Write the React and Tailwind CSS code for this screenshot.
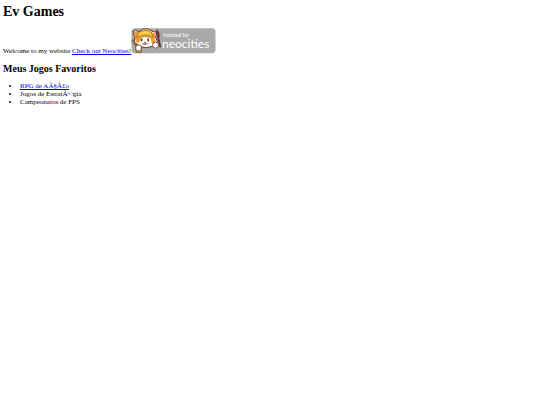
const games = ["Jogos de EstratÃ©gia", "Campeonatos de FPS"];

function NeocitiesBadge() {
  return (
    <svg viewBox="0 0 85 26" className="h-[26px] w-[85px] shrink-0" role="img" aria-label="Hosted by Neocities">
      <rect x="0.5" y="0.2" width="84" height="25" rx="3.5" fill="#a9a9a9" />
      <g strokeLinejoin="round" strokeLinecap="round">
        <path d="M3.5 8.5L2 3.8L4.6 2.2L8 4L11.5 1L17.5 0.9L22 3.6L25.6 4.2L24.6 9.5L26.6 14L22.5 18L15 19.8L8 18.2L3.8 14Z" fill="#fff" stroke="#5b3a1c" strokeWidth="1" />
        <path d="M3.8 9.5L2.8 4.6L5 3.2L8 5L11.8 1.9L17 1.7L21.4 4.8L24.6 5.2L23.6 11.2L25 14L21.2 16L19.4 10L13.5 9L10 10L8 15.2L5 14Z" fill="#ee9b35" />
        <path d="M6 9.3L6.8 5.2Q12.8 0.4 19.6 3.5L22.4 9Q14.5 5.7 6 9.3Z" fill="#f4bd3b" stroke="#a5651e" strokeWidth="0.7" />
        <path d="M9.5 5.5Q13.5 3 18 4.8" fill="none" stroke="#ffe06a" strokeWidth="1" />
        <ellipse cx="10.6" cy="12" rx="0.9" ry="1.4" fill="#422817" />
        <ellipse cx="17.2" cy="12" rx="0.9" ry="1.4" fill="#422817" />
        <path d="M13.2 14H14.8L14 14.9ZM11.3 15.8Q14 17.6 17 15.6" fill="#7b422e" stroke="#7b422e" strokeWidth="0.5" />
        <path d="M1.6 12.6L6.5 18.8" stroke="#643a28" strokeWidth="2.2" />
        <path d="M1.8 12.6L4.8 16.2" stroke="#d9c39b" strokeWidth="1" />
        <path d="M27 8.5L29.2 18.6" stroke="#63281e" strokeWidth="1.7" />
        <path d="M26.8 9Q24.8 4.8 25.8 1.8Q29 4.5 28.2 8.8Z" fill="#8b3433" stroke="#4b2020" strokeWidth="0.6" />
        <path d="M4.6 21.5L5.5 24.6L10.5 24.6L10.5 22" fill="#e59c4a" stroke="#754b2c" strokeWidth="0.7" />
        <circle cx="7.6" cy="20" r="3.1" fill="#fff" stroke="#754b2c" strokeWidth="0.9" />
        <circle cx="24.6" cy="17.2" r="3" fill="#fff" stroke="#754b2c" strokeWidth="0.9" />
      </g>
      <text x="32" y="9" fill="#fff" className="font-['Lato',sans-serif] text-[6px]">hosted by</text>
      <text x="31" y="20" fill="#fff" className="font-['Lato',sans-serif] text-[12px]">neocities</text>
    </svg>
  );
}

export default function App() {
  return (
    <main className="px-[3px] py-1 font-['Liberation_Serif',serif] text-[7px] leading-[8px] text-black">
      <h1 className="text-[14px] leading-4 font-bold">Ev Games</h1>
      <p className="mt-2 flex items-end">
        <span className="leading-[6px]">
          Welcome to my website{" "}
          <a href="https://neocities.org" className="text-[#0000ee] underline">Check out Neocities!</a>
        </span>
        <NeocitiesBadge />
      </p>
      <h2 className="mt-[9px] text-[10px] leading-3 font-bold">Meus Jogos Favoritos</h2>
      <ul className="mt-[7px] list-disc pl-[17px]">
        <li>
          <a href="#rpg" className="text-[#0000ee] underline">RPG de AÃ§Ã£o</a>
        </li>
        {games.map((game) => (
          <li key={game}>{game}</li>
        ))}
      </ul>
    </main>
  );
}
